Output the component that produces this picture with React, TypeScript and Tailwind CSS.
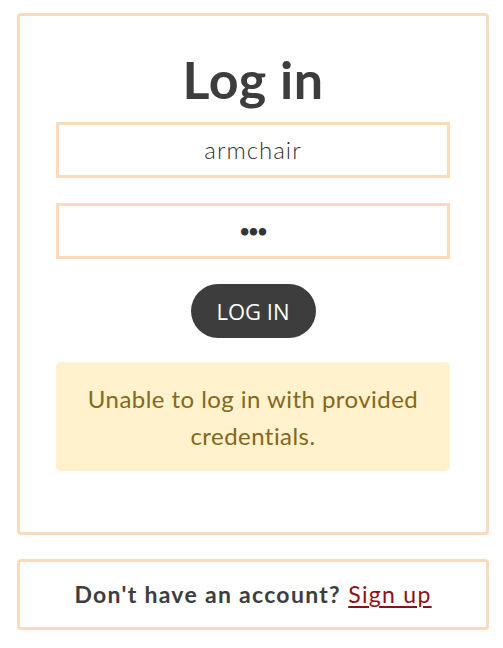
export default function App() {
  const font = { fontFamily: "Lato, 'Noto Sans', sans-serif" };
  return (
    <div className="min-h-screen bg-white" style={font}>
      <div className="ml-[17px] pt-[13px] w-[472px]">
        {/* Login card */}
        <div className="border-[3px] border-[#fadcbc] rounded-[4px] px-[36px] pt-[33px] pb-[61px]">
          <h1 className="text-center text-[52px] font-bold leading-[60px] tracking-[0.5px] text-[#3d3d3d] mb-[13px]">
            Log in
          </h1>
          <div className="h-[56px] border-[3px] border-[#fadcbc] flex items-center justify-center">
            <span className="text-[24px] font-light tracking-[1px] text-[#333]">armchair</span>
          </div>
          <div className="mt-[25px] h-[56px] border-[3px] border-[#fadcbc] flex items-center justify-center">
            <span className="text-[17px] font-bold tracking-[-1px] text-[#333]">•••</span>
          </div>
          <div className="mt-[25px] flex justify-center">
            <button
              className="w-[125px] h-[54px] rounded-full bg-[#3d3d3d] text-white text-[22px]"
              style={{ fontFamily: "'Open Sans', sans-serif" }}
            >
              LOG IN
            </button>
          </div>
          <div className="mt-[24px] h-[109px] rounded-[5px] bg-[#fff2cc] flex items-center justify-center px-6">
            <p className="text-center text-[24px] leading-[37px] tracking-[0.45px] text-[#86671c]">
              Unable to log in with provided credentials.
            </p>
          </div>
        </div>

        {/* Sign up card */}
        <div className="mt-[24px] h-[71px] border-[3px] border-[#fadcbc] rounded-[4px] flex items-center justify-center">
          <p className="text-[23px] tracking-[1.3px] text-[#3d3d3d]">
            <span className="font-bold">Don't have an account?</span>{" "}
            <a href="#" className="text-[#8b1212] underline underline-offset-[3px]">
              Sign up
            </a>
          </p>
        </div>
      </div>
    </div>
  );
}
